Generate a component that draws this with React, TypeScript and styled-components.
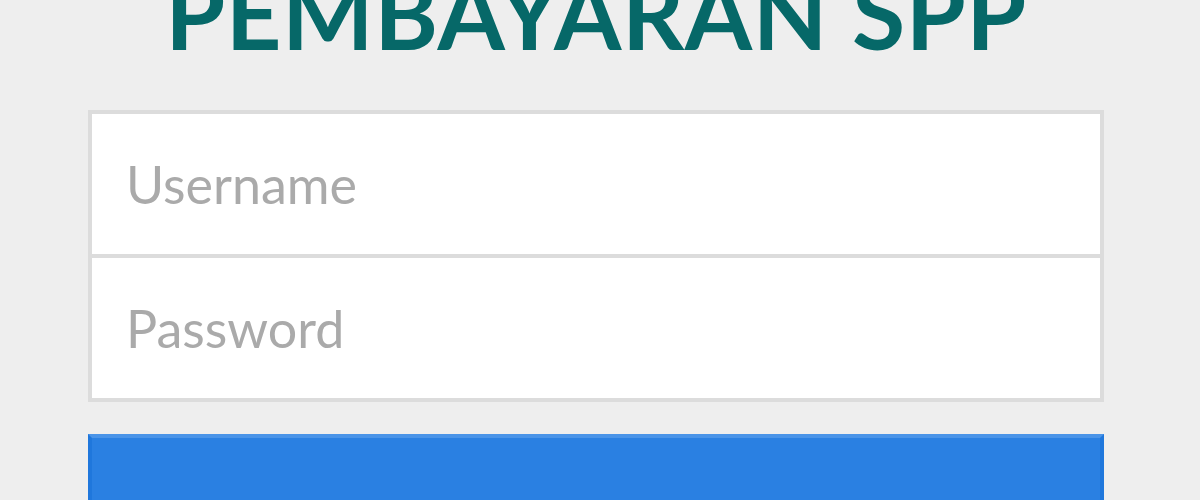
import styled, { createGlobalStyle } from "styled-components";

const GlobalStyle = createGlobalStyle`
  html, body {
    margin: 0;
    padding: 0;
    background: #eeeeee;
    overflow: hidden;
  }
  body {
    font-family: Lato, "Open Sans", "Liberation Sans", sans-serif;
  }
`

const Page = styled.div`
  width: 1016px;
  margin-left: 88px;
`

const Title = styled.h1`
  margin: -36px 0 49px;
  font-family: Lato, "Liberation Sans", sans-serif;
  font-weight: 700;
  font-size: 97px;
  line-height: 1;
  text-align: center;
  color: #066868;
  letter-spacing: 0.5px;
  white-space: nowrap;
`

const Form = styled.form`
  display: flex;
  flex-direction: column;
`

const Field = styled.input<{ $first?: boolean }>`
  box-sizing: border-box;
  height: 148px;
  width: 100%;
  margin: ${p => (p.$first ? "0" : "-4px 0 0")};
  padding: 0 34px;
  border: 4px solid #dcdcdc;
  background: #ffffff;
  font-family: Lato, "Liberation Sans", sans-serif;
  font-size: 52px;
  color: #555555;
  outline: none;
  &::placeholder {
    color: #aaaaaa;
  }
`

const SubmitButton = styled.button`
  box-sizing: border-box;
  width: 100%;
  height: 210px;
  margin-top: 32px;
  border: 4px solid #1f77dc;
  border-top-color: #4a94e8;
  background: #2a80e2;
  color: #ffffff;
  font-family: Lato, "Liberation Sans", sans-serif;
  font-size: 52px;
`

export default function App() {
  return (
    <Page>
      <GlobalStyle />
      <Title>PEMBAYARAN SPP</Title>
      <Form onSubmit={e => e.preventDefault()}>
        <Field $first type="text" placeholder="Username" />
        <Field type="password" placeholder="Password" />
        <SubmitButton type="submit">Login</SubmitButton>
      </Form>
    </Page>
  );
}
